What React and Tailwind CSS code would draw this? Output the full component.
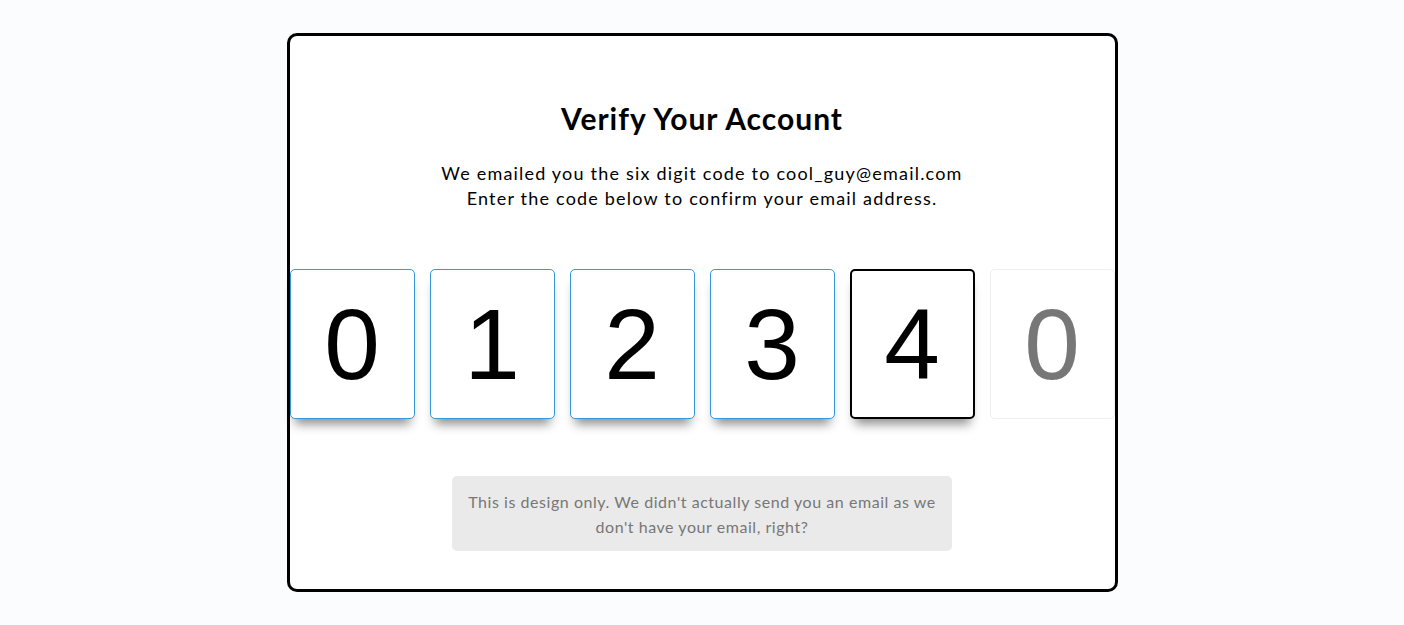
import React from 'react';

const digits = ['0', '1', '2', '3', '4'];

const App = () => {
  return (
    <div className="min-h-screen w-full bg-[#fbfcfe] flex items-center justify-center font-['Lato','Noto_Sans',sans-serif]">
      <div className="w-[831px] h-[559px] bg-white border-[3px] border-black rounded-[10px] flex flex-col items-center pt-[62px]">
        <h2 className="text-[30px] leading-[40px] font-bold tracking-[1px] text-black">Verify Your Account</h2>
        <p className="mt-[23px] text-[18px] leading-[25px] tracking-[1.2px] text-black text-center">
          We emailed you the six digit code to cool_guy@email.com
          <br />
          Enter the code below to confirm your email address.
        </p>
        <div className="mt-[58px] flex gap-[15px] font-['Liberation_Sans',Arial,sans-serif]">
          {digits.map((d, i) => (
            <div
              key={i}
              className={`w-[125px] h-[150px] rounded-[5px] bg-white flex items-center justify-center text-[100px] leading-none text-black shadow-[0_10px_10px_-5px_rgba(0,0,0,0.45)] ${i === 4 ? 'border-2 border-black' : 'border border-[#3498db]'}`}
            >
              {d}
            </div>
          ))}
          <div className="w-[125px] h-[150px] rounded-[5px] bg-white border border-[#eeeeee] flex items-center justify-center text-[100px] leading-none text-[#777777]">
            0
          </div>
        </div>
        <div className="mt-[57px] w-[500px] h-[75px] bg-[#eaeaea] rounded-[5px] flex items-center justify-center px-[12px] text-center text-[16px] leading-[25px] tracking-[0.55px] text-[#777777]">
          This is design only. We didn't actually send you an email as we don't have your email, right?
        </div>
      </div>
    </div>
  );
};

export default App;
